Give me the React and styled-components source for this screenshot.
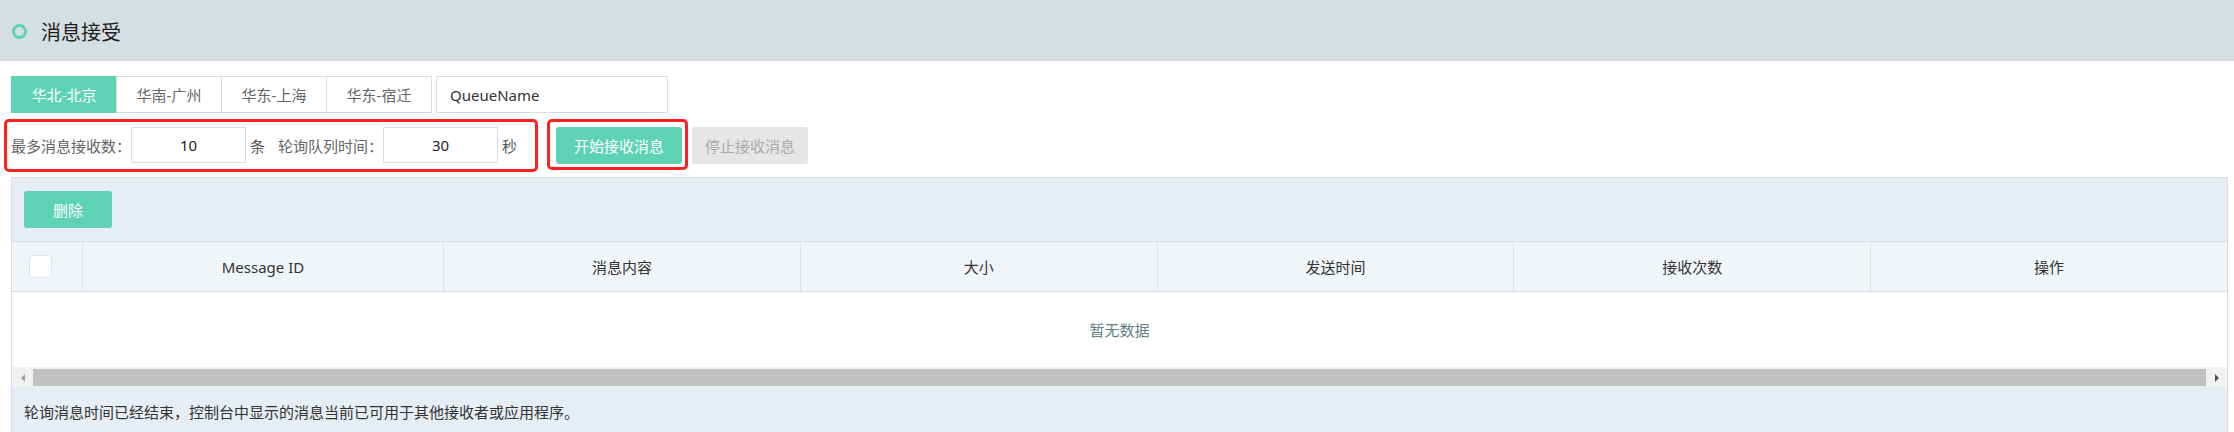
import React from 'react';
import styled, { createGlobalStyle } from 'styled-components';

const teal = '#5dd3b3';
const line = '#d5dde5';

const GlobalStyle = createGlobalStyle`
	body {
		margin: 0;
		background: #fff;
		font-family: "Noto Sans", "Noto Sans CJK SC", sans-serif;
		color: #333;
	}
	* {
		box-sizing: border-box;
	}
`;

const regions = ['华北-北京', '华南-广州', '华东-上海', '华东-宿迁'];
const columns = ['Message ID', '消息内容', '大小', '发送时间', '接收次数', '操作'];

export default function App() {
	return (
		<Page>
			<GlobalStyle />
			<TitleBar>
				<Dot />
				<Title>消息接受</Title>
			</TitleBar>
			<Content>
				<TabRow>
					<Tabs>
						{regions.map((r, i) => (
							<Tab key={r} active={i === 0}>
								{r}
							</Tab>
						))}
					</Tabs>
					<QueueInput defaultValue="QueueName" />
				</TabRow>

				<FormRow>
					<Highlight>
						<Label>最多消息接收数：</Label>
						<NumInput defaultValue="10" />
						<Unit>条</Unit>
						<Label gap>轮询队列时间：</Label>
						<NumInput defaultValue="30" />
						<Unit>秒</Unit>
					</Highlight>
					<ButtonHighlight>
						<PrimaryButton width={126}>开始接收消息</PrimaryButton>
					</ButtonHighlight>
					<DisabledButton>停止接收消息</DisabledButton>
				</FormRow>

				<Panel>
					<Toolbar>
						<PrimaryButton width={88}>删除</PrimaryButton>
					</Toolbar>
					<HeaderRow>
						<CheckCell>
							<Checkbox />
						</CheckCell>
						{columns.map(c => (
							<HeadCell key={c}>{c}</HeadCell>
						))}
					</HeaderRow>
					<EmptyBody>暂无数据</EmptyBody>
					<ScrollTrack>
						<ArrowZone>
							<Arrow dir="left" />
						</ArrowZone>
						<Thumb />
						<ArrowZone>
							<Arrow dir="right" />
						</ArrowZone>
					</ScrollTrack>
					<Footer>轮询消息时间已经结束，控制台中显示的消息当前已可用于其他接收者或应用程序。</Footer>
				</Panel>
			</Content>
		</Page>
	);
}

const Page = styled.div`
	width: 2234px;
`;

const TitleBar = styled.div`
	height: 61px;
	background-color: #d5dee1;
	display: flex;
	align-items: center;
	padding-left: 12px;
	padding-top: 2px;
`;

const Dot = styled.span`
	width: 15px;
	height: 15px;
	border-radius: 50%;
	border: 3.5px solid ${teal};
`;

const Title = styled.h1`
	margin: 0 0 0 14px;
	font-size: 20px;
	font-weight: 400;
	color: #1f1f1f;
`;

const Content = styled.div`
	padding: 15px 6px 0 11px;
`;

const TabRow = styled.div`
	display: flex;
	height: 37px;
`;

const Tabs = styled.div`
	display: flex;
`;

const Tab = styled.div`
	width: 106px;
	height: 37px;
	margin-left: -1px;
	&:first-child {
		margin-left: 0;
	}
	border: 1px solid ${line};
	display: flex;
	align-items: center;
	justify-content: center;
	font-size: 15px;
	background-color: ${props => (props.active ? teal : '#fff')};
	color: ${props => (props.active ? '#fff' : '#666')};
	border-color: ${props => (props.active ? teal : line)};
`;

const QueueInput = styled.input`
	margin-left: 4px;
	width: 232px;
	height: 37px;
	border: 1px solid ${line};
	padding: 0 13px;
	font: inherit;
	font-size: 15px;
	color: #333;
	outline: none;
`;

const FormRow = styled.div`
	display: flex;
	align-items: flex-start;
	margin: 6px 0 0 -7px;
`;

const Highlight = styled.div`
	display: flex;
	align-items: center;
	border: 3px solid #ff1f1f;
	border-radius: 5px;
	padding: 5px 18px 6px 4px;
`;

const ButtonHighlight = styled.div`
	display: flex;
	margin-left: 9px;
	border: 3px solid #ff1f1f;
	border-radius: 5px;
	padding: 5px 3px 3px 6px;
`;

const Label = styled.span`
	font-size: 15px;
	color: #666;
	margin-left: ${props => (props.gap ? '13px' : '0')};
	white-space: nowrap;
`;

const NumInput = styled.input`
	width: 115px;
	height: 36px;
	border: 1px solid ${line};
	text-align: center;
	font: inherit;
	font-size: 15px;
	color: #222;
	outline: none;
`;

const Unit = styled.span`
	margin-left: 4px;
	font-size: 15px;
	color: #555;
`;

const PrimaryButton = styled.button`
	width: ${props => props.width}px;
	height: 37px;
	border: none;
	border-radius: 3px;
	background-color: ${teal};
	color: #fff;
	font: inherit;
	font-size: 15px;
	cursor: pointer;
`;

const DisabledButton = styled.button`
	width: 116px;
	height: 37px;
	margin: 8px 0 0 4px;
	border: none;
	border-radius: 3px;
	background-color: #e6e6e6;
	color: #aaa;
	font: inherit;
	font-size: 15px;
`;

const Panel = styled.div`
	margin-top: 5px;
	width: 2217px;
	border: 1px solid ${line};
	background-color: #e6edf4;
`;

const Toolbar = styled.div`
	padding: 13px 12px;
`;

const HeaderRow = styled.div`
	display: grid;
	grid-template-columns: 70px 361px repeat(5, 1fr);
	height: 51px;
	background-color: #f1f5fa;
	border-top: 1px solid ${line};
	border-bottom: 1px solid ${line};
`;

const HeadCell = styled.div`
	display: flex;
	align-items: center;
	justify-content: center;
	font-size: 15px;
	color: #333;
	border-left: 1px solid #dce3eb;
`;

const CheckCell = styled.div`
	display: flex;
	align-items: center;
	padding-left: 17px;
`;

const Checkbox = styled.span`
	width: 23px;
	height: 23px;
	background: #fff;
	border: 1px solid #dde3ea;
	border-radius: 4px;
`;

const EmptyBody = styled.div`
	height: 75px;
	background: #fff;
	display: flex;
	align-items: center;
	justify-content: center;
	font-size: 15px;
	color: #5f7f85;
`;

const ScrollTrack = styled.div`
	display: flex;
	height: 19px;
	padding-top: 2px;
	background: #f1f1f1;
	border-bottom: 1px solid #f7f7f7;
`;

const ArrowZone = styled.div`
	width: 21px;
	height: 17px;
	display: flex;
	align-items: center;
	justify-content: center;
`;

const Arrow = styled.span`
	width: 0;
	height: 0;
	border-top: 4px solid transparent;
	border-bottom: 4px solid transparent;
	${props =>
		props.dir === 'left'
			? 'border-right: 4px solid #a3a3a3;'
			: 'border-left: 4px solid #505050;'}
`;

const Thumb = styled.div`
	flex: 1;
	height: 17px;
	background: #c1c1c1;
`;

const Footer = styled.div`
	height: 50px;
	display: flex;
	align-items: center;
	padding-left: 12px;
	font-size: 15px;
	color: #333;
`;
